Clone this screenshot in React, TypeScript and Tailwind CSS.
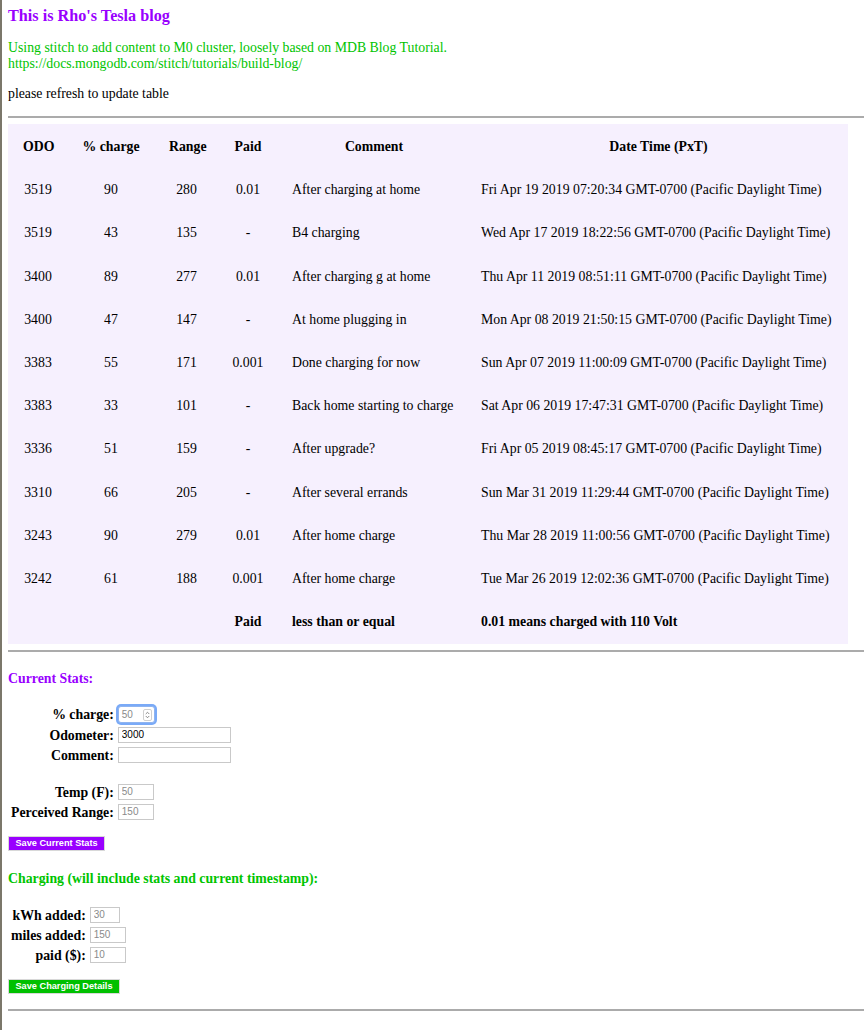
import { ChevronDown, ChevronUp } from "lucide-react";

type Row = {
  odo: string;
  charge: string;
  range: string;
  paid: string;
  comment: string;
  date: string;
};

const rows: Row[] = [
  { odo: "3519", charge: "90", range: "280", paid: "0.01", comment: "After charging at home", date: "Fri Apr 19 2019 07:20:34 GMT-0700 (Pacific Daylight Time)" },
  { odo: "3519", charge: "43", range: "135", paid: "-", comment: "B4 charging", date: "Wed Apr 17 2019 18:22:56 GMT-0700 (Pacific Daylight Time)" },
  { odo: "3400", charge: "89", range: "277", paid: "0.01", comment: "After charging g at home", date: "Thu Apr 11 2019 08:51:11 GMT-0700 (Pacific Daylight Time)" },
  { odo: "3400", charge: "47", range: "147", paid: "-", comment: "At home plugging in", date: "Mon Apr 08 2019 21:50:15 GMT-0700 (Pacific Daylight Time)" },
  { odo: "3383", charge: "55", range: "171", paid: "0.001", comment: "Done charging for now", date: "Sun Apr 07 2019 11:00:09 GMT-0700 (Pacific Daylight Time)" },
  { odo: "3383", charge: "33", range: "101", paid: "-", comment: "Back home starting to charge", date: "Sat Apr 06 2019 17:47:31 GMT-0700 (Pacific Daylight Time)" },
  { odo: "3336", charge: "51", range: "159", paid: "-", comment: "After upgrade?", date: "Fri Apr 05 2019 08:45:17 GMT-0700 (Pacific Daylight Time)" },
  { odo: "3310", charge: "66", range: "205", paid: "-", comment: "After several errands", date: "Sun Mar 31 2019 11:29:44 GMT-0700 (Pacific Daylight Time)" },
  { odo: "3243", charge: "90", range: "279", paid: "0.01", comment: "After home charge", date: "Thu Mar 28 2019 11:00:56 GMT-0700 (Pacific Daylight Time)" },
  { odo: "3242", charge: "61", range: "188", paid: "0.001", comment: "After home charge", date: "Tue Mar 26 2019 12:02:36 GMT-0700 (Pacific Daylight Time)" },
];

const cell = "px-[13px] py-[12px] leading-[17.2px]";
const inputCls =
  "h-[16px] border border-[#c9c9c9] bg-white px-[3px] font-['Liberation_Sans',sans-serif] text-[10px] text-black placeholder:text-[#8a8a8a] outline-none";

function Field({ label, width, placeholder, value }: { label: string; width: string; placeholder?: string; value?: string }) {
  return (
    <tr>
      <td className="p-px text-right leading-[15.5px] font-bold">{label}</td>
      <td className="p-px">
        <input readOnly className={`${inputCls} ${width} block`} placeholder={placeholder} defaultValue={value} />
      </td>
    </tr>
  );
}

export default function App() {
  return (
    <div className="min-h-[1030px] border-l-2 border-[#7b776a] bg-white pl-[6px] font-['Liberation_Serif',serif] text-[13.8px] leading-[16px] text-black">
      <h3 className="pt-[6px] text-[16.2px] leading-[21px] font-bold text-[#9900ff]">This is Rho's Tesla blog</h3>

      <p className="mt-[13px] text-[#00c400]">
        Using stitch to add content to M0 cluster, loosely based on MDB Blog Tutorial.
        <br />
        https://docs.mongodb.com/stitch/tutorials/build-blog/
      </p>

      <p className="mt-[14px]">please refresh to update table</p>

      <hr className="mt-[14px] border-t-2 border-[#ababab]" />

      <table className="mt-[6px] w-[840px] table-fixed border-separate border-spacing-[2px] bg-[#f6f0fe]">
        <thead>
          <tr>
            <th className={`${cell} w-[56px] text-center`}>ODO</th>
            <th className={`${cell} w-[86px] text-center`}>% charge</th>
            <th className={`${cell} w-[61px] text-center`}>Range</th>
            <th className={`${cell} w-[58px] text-center`}>Paid</th>
            <th className={`${cell} w-[190px] text-center`}>Comment</th>
            <th className={`${cell} text-center`}>Date Time (PxT)</th>
          </tr>
        </thead>
        <tbody>
          {rows.map((r, i) => (
            <tr key={i}>
              <td className={`${cell} text-center`}>{r.odo}</td>
              <td className={`${cell} text-center`}>{r.charge}</td>
              <td className={`${cell} text-center`}>{r.range}</td>
              <td className={`${cell} text-center`}>{r.paid}</td>
              <td className={`${cell} whitespace-nowrap`}>{r.comment}</td>
              <td className={`${cell} whitespace-nowrap pl-[10px]`}>{r.date}</td>
            </tr>
          ))}
          <tr className="font-bold">
            <td className={cell}></td>
            <td className={cell}></td>
            <td className={cell}></td>
            <td className={`${cell} text-center`}>Paid</td>
            <td className={`${cell} whitespace-nowrap`}>less than or equal</td>
            <td className={`${cell} whitespace-nowrap pl-[10px]`}>0.01 means charged with 110 Volt</td>
          </tr>
        </tbody>
      </table>

      <hr className="mt-[6px] border-t-2 border-[#ababab]" />

      <h4 className="mt-[19px] font-bold text-[#9900ff]">Current Stats:</h4>

      <table className="mt-[16px] border-separate border-spacing-[2px]">
        <tbody>
          <tr>
            <td className="p-px text-right leading-[15.5px] font-bold">% charge:</td>
            <td className="p-px">
              <div className="flex h-[17px] w-[37px] items-center justify-between rounded-[3px] border border-[#8fb4f0] bg-white pr-[2px] pl-[3px] ring-2 ring-[#7aaaf7]">
                <span className="font-['Liberation_Sans',sans-serif] text-[10px] text-[#8a8a8a]">50</span>
                <span className="flex flex-col rounded-[2px] border border-[#d0d0d0] text-[#666]">
                  <ChevronUp className="-mb-[2px] h-[6px] w-[7px]" strokeWidth={3} />
                  <ChevronDown className="h-[6px] w-[7px]" strokeWidth={3} />
                </span>
              </div>
            </td>
          </tr>
          <Field label="Odometer:" width="w-[113px]" value="3000" />
          <Field label="Comment:" width="w-[113px]" />
          <tr>
            <td className="h-[15px] p-px"></td>
            <td className="p-px"></td>
          </tr>
          <Field label="Temp (F):" width="w-[36px]" placeholder="50" />
          <Field label="Perceived Range:" width="w-[36px]" placeholder="150" />
        </tbody>
      </table>

      <button className="mt-[13px] block h-[15px] w-[97px] border border-[#d8d8d8] bg-[#9900ff] font-['Liberation_Sans',sans-serif] text-[9.2px] leading-[13px] font-bold text-white">
        Save Current Stats
      </button>

      <h4 className="mt-[20px] font-bold text-[#00c400]">Charging (will include stats and current timestamp):</h4>

      <table className="mt-[17px] border-separate border-spacing-[2px]">
        <tbody>
          <Field label="kWh added:" width="w-[30px]" placeholder="30" />
          <Field label="miles added:" width="w-[36px]" placeholder="150" />
          <Field label="paid ($):" width="w-[36px]" placeholder="10" />
        </tbody>
      </table>

      <button className="mt-[13px] block h-[15px] w-[112px] border border-[#d8d8d8] bg-[#00c000] font-['Liberation_Sans',sans-serif] text-[9.2px] leading-[13px] font-bold text-white">
        Save Charging Details
      </button>

      <hr className="mt-[15px] border-t-2 border-[#ababab]" />
    </div>
  );
}
